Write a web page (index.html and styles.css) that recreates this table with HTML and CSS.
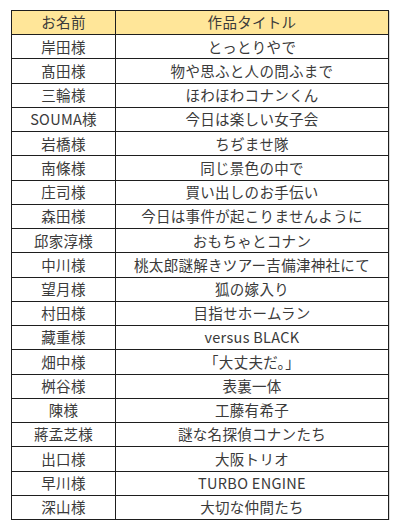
FILE: index.html
```html
<!DOCTYPE html>
<html lang="ja">
<head>
<meta charset="utf-8">
<link rel="stylesheet" href="styles.css">
</head>
<body>
<div class="list">
<div class="cell head">お名前</div><div class="cell head">作品タイトル</div>
<div class="cell">岸田様</div><div class="cell">とっとりやで</div>
<div class="cell">髙田様</div><div class="cell">物や思ふと人の問ふまで</div>
<div class="cell">三輪様</div><div class="cell">ほわほわコナンくん</div>
<div class="cell">SOUMA様</div><div class="cell">今日は楽しい女子会</div>
<div class="cell">岩橋様</div><div class="cell">ちぢませ隊</div>
<div class="cell">南條様</div><div class="cell">同じ景色の中で</div>
<div class="cell">庄司様</div><div class="cell">買い出しのお手伝い</div>
<div class="cell">森田様</div><div class="cell">今日は事件が起こりませんように</div>
<div class="cell">邱家淳様</div><div class="cell">おもちゃとコナン</div>
<div class="cell">中川様</div><div class="cell">桃太郎謎解きツアー吉備津神社にて</div>
<div class="cell">望月様</div><div class="cell">狐の嫁入り</div>
<div class="cell">村田様</div><div class="cell">目指せホームラン</div>
<div class="cell">藏重様</div><div class="cell">versus BLACK</div>
<div class="cell">畑中様</div><div class="cell">「大丈夫だ。」</div>
<div class="cell">桝谷様</div><div class="cell">表裏一体</div>
<div class="cell">陳様</div><div class="cell">工藤有希子</div>
<div class="cell">蔣孟芝様</div><div class="cell">謎な名探偵コナンたち</div>
<div class="cell">出口様</div><div class="cell">大阪トリオ</div>
<div class="cell">早川様</div><div class="cell">TURBO ENGINE</div>
<div class="cell">深山様</div><div class="cell">大切な仲間たち</div>
</div>
</body>
</html>
```
FILE: styles.css
```css
html, body {
  margin: 0;
  padding: 0;
  background: #ffffff;
}
body {
  padding: 10px 0 0 11px;
  font-family: "Noto Sans CJK JP", "Noto Sans", sans-serif;
  color: #3a3a3a;
}
.list {
  box-sizing: border-box;
  width: 378px;
  height: 510px;
  display: grid;
  grid-template-columns: 103px 1fr;
  grid-template-rows: repeat(21, 1fr);
  gap: 1px;
  border: 1px solid #1e1e1e;
  background: #1e1e1e;
  box-shadow: 1px 1px 0 #d9d9d9;
}
.cell {
  background: #ffffff;
  display: flex;
  align-items: center;
  justify-content: center;
  font-size: 14.5px;
  letter-spacing: 0.3px;
  line-height: 1;
  white-space: nowrap;
}
.head {
  background: #ffe699;
}
```
